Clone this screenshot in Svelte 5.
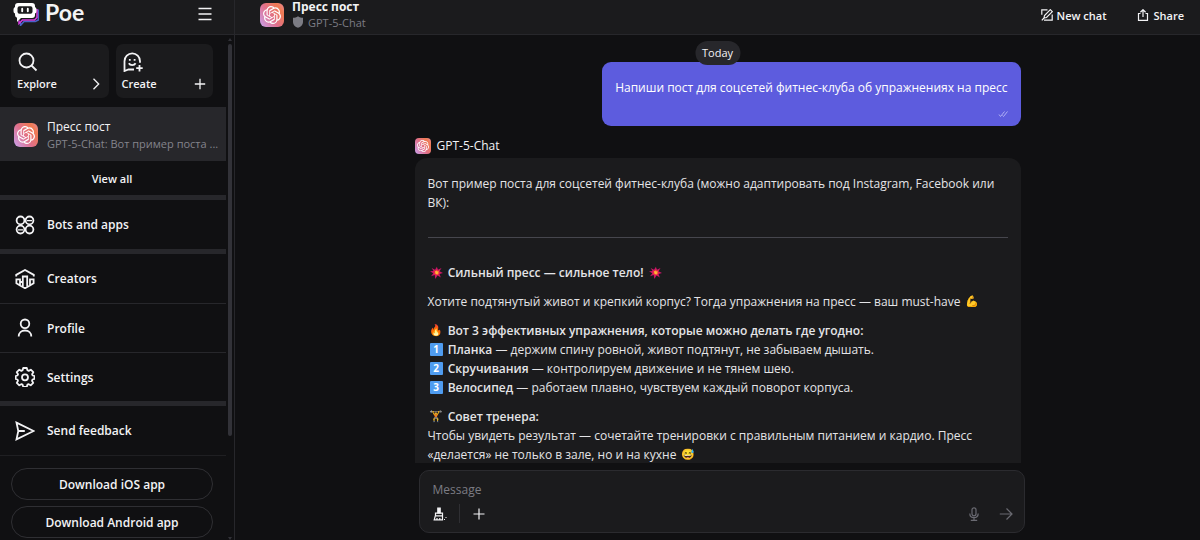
<script>
    let message = $state('');

    const mainLinks = [
        { label: 'Creators', icon: 'creators' },
        { label: 'Profile', icon: 'profile' },
        { label: 'Settings', icon: 'settings' }
    ];

    const exercises = [
        { num: '1', name: 'Планка', text: 'держим спину ровной, живот подтянут, не забываем дышать.' },
        { num: '2', name: 'Скручивания', text: 'контролируем движение и не тянем шею.' },
        { num: '3', name: 'Велосипед', text: 'работаем плавно, чувствуем каждый поворот корпуса.' }
    ];
</script>

{#snippet avatar(size)}
    <span class="avatar {size}">
        <svg viewBox="0 0 24 24" fill="#fff" aria-hidden="true">
            <path d="M22.2819 9.8211a5.9847 5.9847 0 0 0-.5157-4.9108 6.0462 6.0462 0 0 0-6.5098-2.9A6.0651 6.0651 0 0 0 4.9807 4.1818a5.9847 5.9847 0 0 0-3.9977 2.9 6.0462 6.0462 0 0 0 .7427 7.0966 5.98 5.98 0 0 0 .511 4.9107 6.051 6.051 0 0 0 6.5146 2.9001A5.9847 5.9847 0 0 0 13.2599 24a6.0557 6.0557 0 0 0 5.7718-4.2058 5.9894 5.9894 0 0 0 3.9977-2.9001 6.0557 6.0557 0 0 0-.7475-7.0729zm-9.022 12.6081a4.4755 4.4755 0 0 1-2.8764-1.0408l.1419-.0804 4.7783-2.7582a.7948.7948 0 0 0 .3927-.6813v-6.7369l2.02 1.1686a.071.071 0 0 1 .038.052v5.5826a4.504 4.504 0 0 1-4.4945 4.4944zm-9.6607-4.1254a4.4708 4.4708 0 0 1-.5346-3.0137l.142.0852 4.783 2.7582a.7712.7712 0 0 0 .7806 0l5.8428-3.3685v2.3324a.0804.0804 0 0 1-.0332.0615L9.74 19.9502a4.4992 4.4992 0 0 1-6.1408-1.6464zM2.3408 7.8956a4.485 4.485 0 0 1 2.3655-1.9728V11.6a.7664.7664 0 0 0 .3879.6765l5.8144 3.3543-2.0201 1.1685a.0757.0757 0 0 1-.071 0l-4.8303-2.7865A4.504 4.504 0 0 1 2.3408 7.872zm16.5963 3.8558L13.1038 8.364 15.1192 7.2a.0757.0757 0 0 1 .071 0l4.8303 2.7913a4.4944 4.4944 0 0 1-.6765 8.1042v-5.6772a.79.79 0 0 0-.407-.667zm2.0107-3.0231l-.142-.0852-4.7735-2.7818a.7759.7759 0 0 0-.7854 0L9.409 9.2297V6.8974a.0662.0662 0 0 1 .0284-.0615l4.8303-2.7866a4.4992 4.4992 0 0 1 6.6802 4.66zM8.3065 12.863l-2.02-1.1638a.0804.0804 0 0 1-.038-.0567V6.0742a4.4992 4.4992 0 0 1 7.3757-3.4537l-.142.0805L8.704 5.459a.7948.7948 0 0 0-.3927.6813zm1.0976-2.3654l2.602-1.4998 2.6069 1.4998v2.9994l-2.5974 1.4997-2.6067-1.4997Z" />
        </svg>
    </span>
{/snippet}

{#snippet boom()}
    <span class="emoji" role="img" aria-label="💥">
        <svg viewBox="0 0 16 16" aria-hidden="true">
            <path fill="#c9146a" d="m2 2.500 4.200 2L8.500 1l1.200 3.700 4.500-2.200-2.500 4L16 8.500l-4.200 1.300 1.500 4.200-4-2.400L6.500 16l-.7-4.800-4.500 1.300L4 9 0 6.500l4.300-.3z" />
            <path fill="#ee2a3c" d="m4.300 4.300 3 1.400L8.700 3l.7 2.800 3-1.200-1.700 2.600 2.800 1.300-2.900.8.8 2.600-2.700-1.500-1.600 2.600-.4-3.200-2.900.6 1.800-2-2.400-1.300 2.700-.3z" />
            <path fill="#ffb636" d="m6 6 1.700.6.8-1.600.6 1.700L11 6.500l-1 1.600 1.300.9-1.700.3.200 1.500-1.500-.9-1 1-.2-1.700-1.500-.3 1-1z" />
        </svg>
    </span>
{/snippet}

{#snippet navIcon(name)}
    <svg class="nav_icon" viewBox="0 0 20 20" aria-hidden="true">
        {#if name === 'bots'}
            <circle cx="5.500" cy="5.400" r="3.900" />
            <circle cx="14.500" cy="5.400" r="3.900" />
            <circle cx="5.500" cy="14.600" r="3.900" />
            <circle cx="14.500" cy="14.600" r="3.900" />
            <path d="M12 5.600h5M3 14.800h5" stroke-width="1.300" />
        {:else if name === 'creators'}
            <path d="M1.200 7.500V5.900L10 1l8.800 4.900v1.600M1.400 10.300H5v6.200l-3.600-2.200zM7.800 18V7.500h4.400V18L10 19.200zM15 10.300h3.600v4L15 16.500zM5 16.500 7.800 18M15 16.500 12.200 18M5 13h2.800" />
        {:else if name === 'profile'}
            <circle cx="10" cy="5.800" r="4.300" />
            <path d="M3.700 18.500c0-3.800 2.700-6 6.300-6s6.300 2.200 6.300 6" />
        {:else if name === 'settings'}
            <path d="M8.200 1h3.600l.6 2.300 1.300.6 2.100-1.200 2.500 2.500-1.200 2.100.5 1.200 1.900.5v2.900l-2 .6-.5 1.300 1.200 2.100-2.500 2.400-2-1.100-1.300.5-.6 2.100H8.200l-.6-2.100-1.300-.5-2 1.100-2.500-2.400L3 13.800l-.5-1.300-1.800-.6V9l1.800-.5.5-1.200-1.200-2.100 2.500-2.500 2.100 1.200 1.200-.6z" stroke-linejoin="round" />
            <circle cx="10" cy="10.300" r="3" />
        {:else}
            <path d="M1.500 1.600 18.700 10 1.500 18.400 3.300 10zM3.300 10h6.500" />
        {/if}
    </svg>
{/snippet}

<div class="app">
    <aside class="sidebar">
        <header class="brand_bar">
            <a class="brand" href="/">
                <svg class="brand_logo" viewBox="0 0 27 24" aria-hidden="true">
                    <path d="M25.300 7.500v10.500l-3 1.500H11l-3.500 4v-3" fill="none" stroke="#4a62c8" stroke-width="1.500" />
                    <path d="M24 7v8.500L21.500 18H9.500L6 21.500v-3" fill="none" stroke="#d63be0" stroke-width="1.500" />
                    <path fill="#fff" fill-rule="evenodd" d="M5 1h14a3 3 0 0 1 3 3v1a2.500 2.500 0 0 1 1.500 2.300v2A2.500 2.500 0 0 1 22 11.600V13a3 3 0 0 1-3 3H8l-4 4v-4.200A3 3 0 0 1 2 13v-1.400A2.500 2.500 0 0 1 .5 9.300v-2A2.500 2.500 0 0 1 2 5V4a3 3 0 0 1 3-3zM6.500 4.200a2 2 0 0 0-2 2v3.600a2 2 0 0 0 2 2h11a2 2 0 0 0 2-2V6.200a2 2 0 0 0-2-2z" />
                    <path d="M9.200 6.800v2.400M14.800 6.800v2.400" stroke="#fff" stroke-width="1.900" stroke-linecap="round" />
                </svg>
                <span class="brand_name">Poe</span>
            </a>
            <button class="plain" aria-label="Menu">
                <svg class="menu_icon" viewBox="0 0 14 14" aria-hidden="true">
                    <path d="M.5 1.500h13M.5 7h13M.5 12.500h13" stroke="currentColor" stroke-width="1.500" />
                </svg>
            </button>
        </header>

        <div class="sidebar_body">
            <div class="sidebar_content">
                <div class="tiles">
                    <a class="tile" href="/explore">
                        <svg class="tile_icon" viewBox="0 0 20 20" aria-hidden="true">
                            <circle cx="8.500" cy="8.500" r="7" />
                            <path d="m13.500 13.500 5 5" />
                        </svg>
                        <span class="tile_row">
                            Explore
                            <svg class="tile_mark" viewBox="0 0 12 12" aria-hidden="true"><path d="m3.500.8 5.200 5.200-5.200 5.200" /></svg>
                        </span>
                    </a>
                    <a class="tile" href="/create_bot">
                        <svg class="tile_icon" viewBox="0 0 20 20" aria-hidden="true">
                            <path d="M11 17.500H5.500L1.500 19V9.200a7.500 7.500 0 0 1 15.500 0v1.500" />
                            <path d="M6.800 7v1.800M11.600 7v1.800M5.800 11.300c1.400 2.400 5.400 2.400 6.800 0M16.500 13v6.500M13.200 16.200h6.500" />
                        </svg>
                        <span class="tile_row">
                            Create
                            <svg class="tile_mark" viewBox="0 0 12 12" aria-hidden="true"><path d="M6 .8v10.400M.8 6h10.400" /></svg>
                        </span>
                    </a>
                </div>

                <a class="chat_item" href="/chat">
                    {@render avatar('medium')}
                    <span class="chat_text">
                        <span class="chat_title">Пресс пост</span>
                        <span class="chat_preview">GPT-5-Chat: Вот пример поста ...</span>
                    </span>
                </a>
                <a class="view_all" href="/chats">View all</a>

                <nav>
                    <div class="nav_group">
                        <a class="nav_item" href="/bots">{@render navIcon('bots')}Bots and apps</a>
                    </div>
                    <div class="nav_group">
                        {#each mainLinks as link}
                            <a class="nav_item" href="/{link.icon}">{@render navIcon(link.icon)}{link.label}</a>
                        {/each}
                    </div>
                    <div class="nav_group last">
                        <a class="nav_item" href="/contact">{@render navIcon('feedback')}Send feedback</a>
                    </div>
                </nav>

                <div class="downloads">
                    <button class="download">Download iOS app</button>
                    <button class="download">Download Android app</button>
                </div>
            </div>
            <div class="scrollbar" aria-hidden="true">
                <span class="arrow up"></span>
                <span class="thumb"></span>
                <span class="arrow down"></span>
            </div>
        </div>
    </aside>

    <main>
        <header class="chat_bar">
            <div class="chat_head">
                {@render avatar('medium')}
                <div>
                    <h1>Пресс пост</h1>
                    <p class="chat_bot">
                        <svg viewBox="0 0 12 12" aria-hidden="true"><path fill="currentColor" d="M6 .2c1.500 1 3.200 1.500 5 1.500v4.500c0 2.700-2.200 4.600-5 5.600-2.800-1-5-2.900-5-5.600V1.700C2.800 1.700 4.500 1.200 6 .2z" /></svg>
                        GPT-5-Chat
                    </p>
                </div>
            </div>
            <div class="actions">
                <button class="plain action">
                    <svg viewBox="0 0 12 12" aria-hidden="true">
                        <path d="M6.500.8H.8v5M3 11.200h8.200V5.500M3 9l.5-2.500L9.300.7l2 2-5.800 5.800zM.8 11.400l2.200-2.400" />
                    </svg>
                    New chat
                </button>
                <button class="plain action">
                    <svg viewBox="0 0 12 12" aria-hidden="true">
                        <path d="M3.500 4.500H1.500v6.800h9V4.500h-2M6 8V.8M3.400 3.200 6 .7l2.600 2.500" />
                    </svg>
                    Share
                </button>
            </div>
        </header>

        <section class="thread">
            <div class="column">
                <span class="day">Today</span>
                <div class="bubble mine">
                    <p>Напиши пост для соцсетей фитнес-клуба об упражнениях на пресс</p>
                    <svg class="ticks" viewBox="0 0 10 8" aria-hidden="true"><path d="m1 4.500 1.500 2L6.500 1.500M4.500 5.500l1 1L9.500 1.500" /></svg>
                </div>

                <div class="sender">
                    {@render avatar('small')}
                    GPT-5-Chat
                </div>
                <div class="bubble">
                    <p>Вот пример поста для соцсетей фитнес-клуба (можно адаптировать под Instagram, Facebook или ВК):</p>
                    <hr />
                    <p>{@render boom()} <strong>Сильный пресс — сильное тело!</strong> {@render boom()}</p>
                    <p>Хотите подтянутый живот и крепкий корпус? Тогда упражнения на пресс — ваш must-have <span class="emoji">💪</span></p>
                    <p>
                        <span class="emoji">🔥</span> <strong>Вот 3 эффективных упражнения, которые можно делать где угодно:</strong>
                        {#each exercises as item}
                            <br /><span class="emoji"><span class="keycap">{item.num}</span></span> <strong>{item.name}</strong> — {item.text}
                        {/each}
                    </p>
                    <p>
                        <span class="emoji">🏋️</span> <strong>Совет тренера:</strong><br />
                        Чтобы увидеть результат — сочетайте тренировки с правильным питанием и кардио. Пресс «делается» не только в зале, но и на кухне <span class="emoji">😅</span>
                    </p>
                </div>
            </div>
        </section>

        <div class="composer_wrap">
            <form class="composer" onsubmit={(e) => e.preventDefault()}>
                <textarea rows="1" aria-label="Message" placeholder="Message" bind:value={message}></textarea>
                <div class="tools">
                    <button type="button" class="plain" aria-label="Clear context">
                        <svg class="tool" viewBox="0 0 14 14" aria-hidden="true">
                            <path d="M4.800 6V1.200h2.400V6z" fill="currentColor" />
                            <path d="M2.500 6.200h7v2.600h-7zM2.300 8.800 1.200 12.800h8.300L9.500 8.800M4 11v1.800M6.800 11v1.800M11 12.500h1M12.500 10.500h1" />
                        </svg>
                    </button>
                    <span class="divider"></span>
                    <button type="button" class="plain" aria-label="Attach file">
                        <svg class="tool" viewBox="0 0 14 14" aria-hidden="true"><path d="M7 1.500v11M1.500 7h11" /></svg>
                    </button>
                    <button type="button" class="plain muted voice" aria-label="Record voice">
                        <svg class="tool" viewBox="0 0 14 14" aria-hidden="true">
                            <rect x="5" y=".8" width="4" height="8" rx="2" />
                            <path d="M2.800 6.500c0 5.500 8.400 5.500 8.400 0M7 10.700v2.500M3.800 13.300h6.400" />
                        </svg>
                    </button>
                    <button type="submit" class="plain muted" aria-label="Send message">
                        <svg class="tool" viewBox="0 0 14 14" aria-hidden="true"><path d="M.8 7h12M7.500 1.500 13 7l-5.500 5.500" /></svg>
                    </button>
                </div>
            </form>
        </div>
    </main>
</div>

<style>
    :global(body) {
        margin: 0;
        background: #101012;
    }

    .app {
        display: flex;
        height: 100vh;
        overflow: hidden;
        background: #101012;
        color: #f3f3f5;
        font: 12px/19px "Open Sans", "Noto Sans", sans-serif;
    }

    .app * {
        box-sizing: border-box;
    }

    a {
        color: inherit;
        text-decoration: none;
    }

    p, h1 {
        margin: 0;
    }

    strong {
        font-weight: 600;
    }

    svg {
        display: block;
        flex: none;
    }

    button {
        font: inherit;
        color: inherit;
        cursor: pointer;
    }

    .plain {
        border: none;
        background: none;
        padding: 0;
    }

    .avatar {
        flex: none;
        display: grid;
        place-items: center;
        background: linear-gradient(55deg, #c9a3f0 0%, #e0708c 45%, #ef7b52 80%, #e889a0 100%);
    }

    .avatar svg {
        width: 75%;
        height: 75%;
    }

    .avatar.medium {
        width: 24px;
        height: 24px;
        border-radius: 6px;
    }

    .avatar.small {
        width: 16px;
        height: 16px;
        border-radius: 4px;
    }

    /* sidebar */
    .sidebar {
        flex: none;
        width: 235px;
        display: flex;
        flex-direction: column;
        border-right: 1px solid #27272b;
    }

    .brand_bar, .chat_bar {
        flex: none;
        display: flex;
        align-items: center;
        justify-content: space-between;
        height: 35px;
        background: #1b1b1d;
        border-bottom: 1px solid #27272b;
    }

    .brand_bar {
        padding: 0 22px 6px 13px;
    }

    .brand {
        display: flex;
        align-items: center;
        gap: 5px;
        font: 700 23px/24px Lato, sans-serif;
    }

    .brand_name {
        padding-bottom: 4px;
    }

    .brand_logo {
        width: 27px;
        height: 24px;
    }

    .menu_icon {
        width: 14px;
        height: 14px;
    }

    .sidebar_body {
        flex: 1;
        min-height: 0;
        display: flex;
        overflow: hidden;
    }

    .sidebar_content {
        flex: 1;
        min-width: 0;
    }

    .tiles {
        display: flex;
        gap: 7px;
        padding: 9px 13px 9px 11px;
    }

    .tile {
        flex: 1;
        display: flex;
        flex-direction: column;
        justify-content: space-between;
        height: 54px;
        padding: 8px 7px 6px 6px;
        border-radius: 7px;
        background: #1b1b1d;
        font-size: 11px;
        line-height: 17px;
        font-weight: 600;
    }

    .tile_icon, .nav_icon, .tile_mark, .action svg, .tool, .ticks {
        fill: none;
        stroke: currentColor;
        stroke-width: 1.8;
    }

    .tile_icon {
        width: 20px;
        height: 20px;
        margin-left: 1px;
    }

    .tile_row {
        display: flex;
        align-items: center;
        justify-content: space-between;
    }

    .tile_mark {
        width: 12px;
        height: 12px;
        stroke-width: 1.3;
    }

    .chat_item {
        display: flex;
        align-items: center;
        gap: 9px;
        height: 54px;
        padding: 1px 2px 0 14px;
        background: #27272b;
    }

    .chat_text {
        min-width: 0;
    }

    .chat_title, .chat_preview {
        display: block;
        line-height: 17px;
    }

    .chat_preview {
        color: #84848c;
        font-size: 11px;
        overflow: hidden;
        text-overflow: ellipsis;
        white-space: nowrap;
    }

    .view_all {
        display: block;
        padding: 9px 2px 8px 0;
        text-align: center;
        font-size: 11px;
        line-height: 17px;
        font-weight: 600;
    }

    .nav_group {
        border-top: 5px solid #27272b;
    }

    .nav_item {
        display: flex;
        align-items: center;
        gap: 12px;
        height: 49px;
        padding-left: 15px;
        font-weight: 600;
    }

    .nav_item + .nav_item {
        border-top: 1px solid #27272b;
    }

    .nav_group.last {
        border-bottom: 1px solid #1f1f22;
    }

    .nav_icon {
        width: 20px;
        height: 20px;
    }

    .downloads {
        display: flex;
        flex-direction: column;
        gap: 6px;
        padding: 12px 13px 12px 11px;
    }

    .download {
        height: 32px;
        border: 1px solid #2f2f33;
        border-radius: 16px;
        background: none;
        font-weight: 600;
    }

    .scrollbar {
        flex: none;
        width: 8px;
        display: flex;
        flex-direction: column;
        align-items: center;
        padding-top: 3px;
    }

    .thumb {
        width: 4px;
        height: 78%;
        margin: 3px 0 auto;
        border-radius: 2px;
        background: #323238;
    }

    .arrow {
        border: 2px solid transparent;
    }

    .up {
        border-top: none;
        border-bottom: 3px solid #323238;
    }

    .down {
        border-bottom: none;
        border-top: 3px solid #323238;
    }

    /* chat */
    main {
        flex: 1;
        min-width: 0;
        display: flex;
        flex-direction: column;
    }

    .chat_bar {
        padding: 0 16px 4px 25px;
    }

    .chat_head {
        display: flex;
        align-items: center;
        gap: 8px;
    }

    h1 {
        font-size: 12px;
        line-height: 14px;
        font-weight: 700;
    }

    .chat_bot {
        display: flex;
        align-items: center;
        gap: 4px;
        color: #7c7c84;
        font-size: 11px;
        line-height: 17px;
    }

    .chat_bot svg {
        width: 12px;
        height: 12px;
    }

    .actions {
        display: flex;
        gap: 31px;
    }

    .action {
        display: flex;
        align-items: center;
        gap: 4px;
        font-size: 11px;
        font-weight: 600;
    }

    .action svg {
        width: 12px;
        height: 12px;
        stroke-width: 1.2;
    }

    .thread {
        flex: 1;
        min-height: 0;
        overflow: hidden;
        padding-top: 27px;
    }

    .column {
        position: relative;
        display: flex;
        flex-direction: column;
        align-items: flex-start;
        max-width: 606px;
        margin: 0 auto;
    }

    .day {
        position: absolute;
        top: -21px;
        left: 50%;
        transform: translateX(-50%);
        padding: 3px 7px;
        border-radius: 12px;
        background: #27272b;
        font-size: 11px;
        line-height: 18px;
    }

    .bubble {
        padding: 16px 13px;
        border-radius: 12px;
        background: #1b1b1d;
        color: #e4e4e7;
    }

    .bubble p + p {
        margin-top: 10px;
    }

    .bubble hr {
        margin: 25px 0;
        border: none;
        border-top: 1px solid #46464d;
    }

    .mine {
        align-self: flex-end;
        padding-bottom: 8px;
        border-radius: 9px;
        background: #5d5cde;
        color: #fff;
    }

    .ticks {
        width: 10px;
        height: 8px;
        margin: 13px 0 0 auto;
        stroke: #b0aff4;
        stroke-width: 1;
    }

    .sender {
        display: flex;
        align-items: center;
        gap: 6px;
        padding: 10px 0 3px;
    }

    .emoji {
        display: inline-flex;
        justify-content: center;
        align-items: center;
        width: 17px;
        height: 19px;
        vertical-align: top;
        font: 11px/19px "Noto Color Emoji", sans-serif;
    }

    .emoji svg {
        width: 13px;
        height: 13px;
    }

    .keycap {
        width: 13px;
        height: 13px;
        border-radius: 1px;
        background: #4f9cf0;
        color: #fff;
        font: 700 10px/13px "Open Sans", sans-serif;
        text-align: center;
    }

    .composer_wrap {
        padding: 7px 16px 7px 24px;
    }

    .composer {
        max-width: 606px;
        margin: 0 auto;
        padding: 9px 11px 9px 13px;
        border: 1px solid #2b2b2f;
        border-radius: 10px;
        background: #1b1b1d;
    }

    textarea {
        display: block;
        width: 100%;
        padding: 0;
        border: none;
        outline: none;
        resize: none;
        background: none;
        color: inherit;
        font: inherit;
    }

    textarea::placeholder {
        color: #7c7c84;
        opacity: 1;
    }

    .tools {
        display: flex;
        align-items: center;
        gap: 12px;
        margin-top: 5px;
    }

    .divider {
        width: 1px;
        height: 19px;
        background: #2f2f33;
    }

    .tool {
        width: 14px;
        height: 14px;
        stroke-width: 1.2;
    }

    .muted {
        color: #6a6a72;
    }

    .voice {
        margin-left: auto;
        margin-right: 6px;
    }
</style>
